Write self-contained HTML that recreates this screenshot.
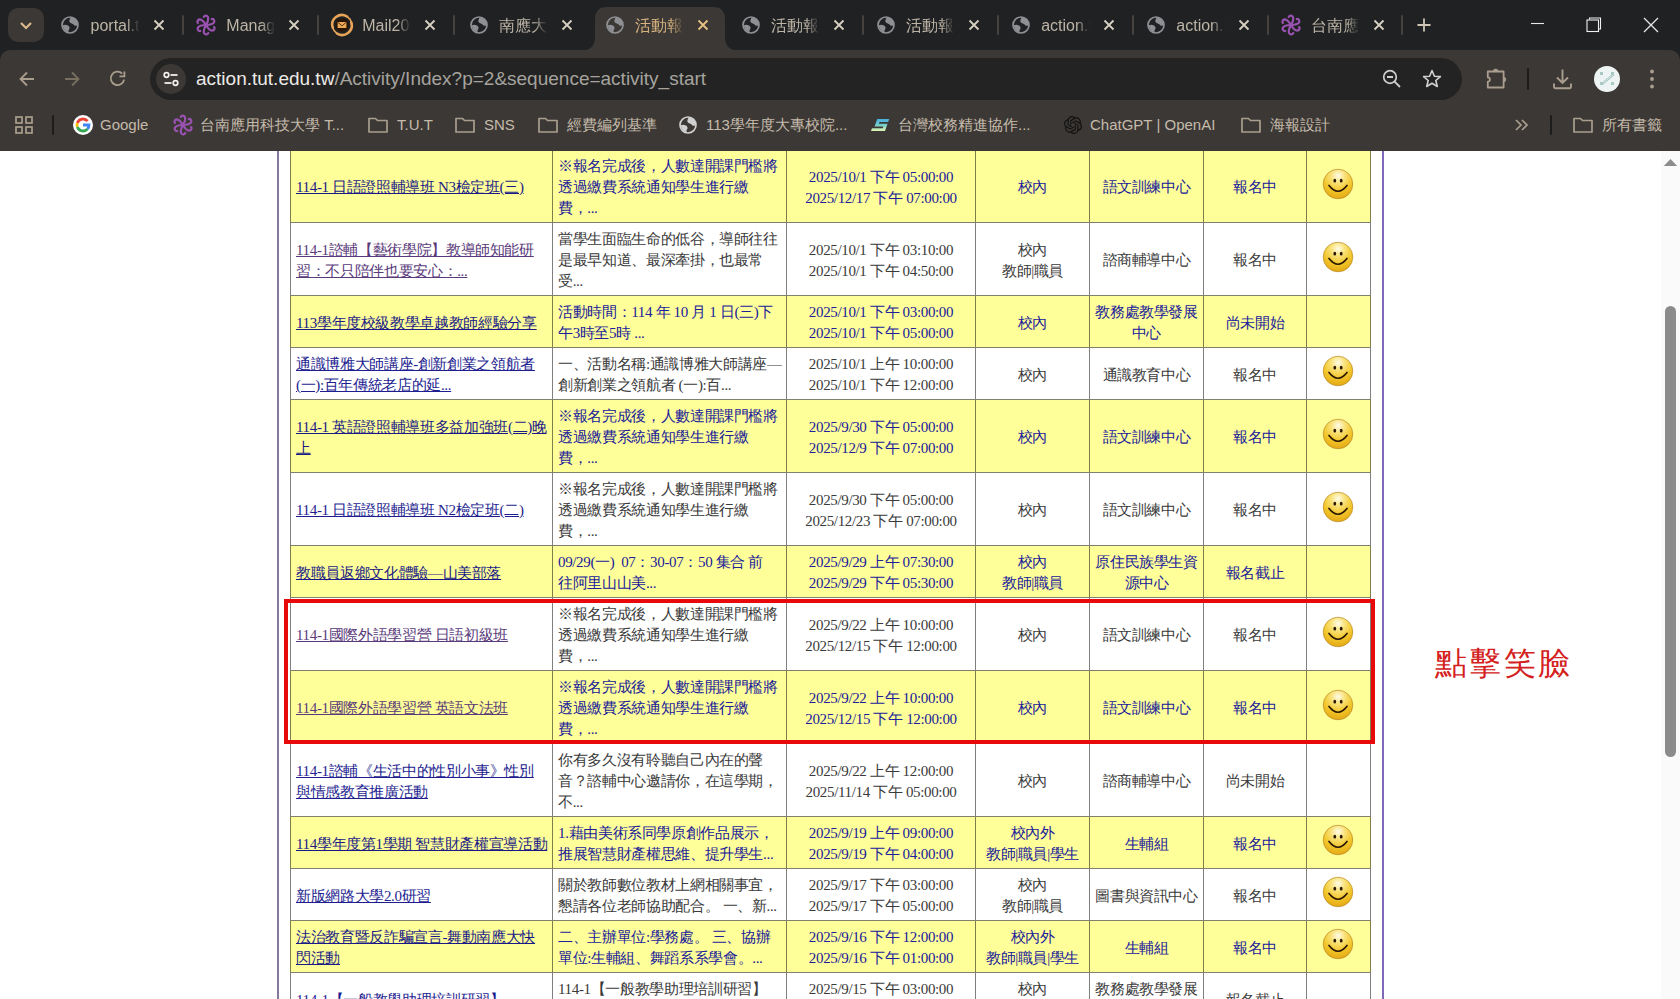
<!DOCTYPE html>
<html><head><meta charset="utf-8"><title>活動報名</title><style>
*{box-sizing:border-box}
html,body{margin:0;padding:0;width:1680px;height:999px;overflow:hidden;background:#fff;position:relative}
body{font-family:"Liberation Sans",sans-serif}
#tabstrip{position:absolute;left:0;top:0;width:1680px;height:70px;background:#1f2123}
.tsbtn{position:absolute;left:8px;top:8px;width:36px;height:34px;border-radius:10px;background:#3c3835}
.tsbtn svg{display:block}
.ic{position:absolute;display:block}
.ttl{position:absolute;top:15px;height:22px;line-height:22px;font-size:16px;width:49px;overflow:hidden;white-space:nowrap;
 -webkit-mask-image:linear-gradient(to right,#000 72%,transparent 100%)}
.tsep{position:absolute;top:15px;width:2px;height:20px;background:#46423d;border-radius:1px}
#toolbar{position:absolute;left:0;top:50px;width:1680px;height:101px;background:#3c3835;border-radius:10px 10px 0 0}
#omni{position:absolute;left:150px;top:58px;width:1312px;height:42px;border-radius:21px;background:#232323}
#url{position:absolute;left:196px;top:66px;height:26px;line-height:26px;font-size:19px;white-space:nowrap}
.bmt{position:absolute;top:114px;height:22px;line-height:22px;font-size:15px;color:#c5bbab;white-space:nowrap}
#page{position:absolute;left:0;top:151px;width:1661px;height:848px;background:#fff;overflow:hidden}
#sb{position:absolute;left:1661px;top:151px;width:19px;height:848px;background:#fafafa}
.pl{position:absolute;width:2px;background:#8a74b8}
#tbl{position:absolute;left:0;top:-151px;width:1680px;height:1200px;font-family:"Liberation Serif",serif;font-size:15px;line-height:21px;letter-spacing:-0.35px}
.row{position:absolute;left:290px;width:1081px}
.ry{background:#ffff99;color:#20209a}
.rw{background:#fff;color:#3a3a3a}
.c{position:absolute;top:0;bottom:0;display:flex;align-items:center;white-space:nowrap;padding-top:3px}
.c1,.c2{justify-content:flex-start;padding-left:5px;text-align:left}
.c3,.c4,.c5,.c6,.c7{justify-content:center;text-align:center}
.lk{text-decoration:underline}
.ry .lk{color:#1a1a86}
.rw .lk{color:#1e1e90}
.lk.lv{color:#5a3a7a}
.hl{position:absolute;left:290px;width:1081px;height:1px;background:#80806c}
.vl{position:absolute;top:0;bottom:0;width:1px;background:rgba(0,0,0,0.5)}
#redbox{position:absolute;left:284px;top:599px;border:4.5px solid #e80a0a}
#note{position:absolute;left:1435px;top:643px;font-size:32px;line-height:40px;color:#d42020;white-space:nowrap;letter-spacing:2.3px}
</style></head>
<body>
<div id="tabstrip"></div>
<div class="tsbtn"><svg width="36" height="34" viewBox="0 0 36 34"><path d="M13 15 L18 20 L23 15" fill="none" stroke="#dcb98a" stroke-width="2.2"/></svg></div>
<svg style="position:absolute;left:579px;top:7px" width="162" height="44" viewBox="0 0 162 44">
<path d="M0 44 Q16 44 16 30 L16 12 Q16 0 28 0 L134 0 Q146 0 146 12 L146 30 Q146 44 162 44 Z" fill="#3c3835"/></svg>
<svg class="ic" style="left:61.0px;top:16px" width="18" height="18" viewBox="0 0 18 18"><circle cx="9" cy="9" r="8" fill="none" stroke="#8e9094" stroke-width="1.7"/><path fill="#8e9094" d="M9.5 1.5 Q8 4.5 8.3 5.5 Q8.8 7.2 10.8 7.4 Q12.5 7.6 13.5 9.6 Q14.8 10.2 16.3 9.2 L16.3 6 Q14.5 2.3 9.5 1.5 Z"/><path fill="#8e9094" d="M1.7 9.2 Q3.5 8.6 5.5 8.9 Q8 9.3 8.5 11.3 Q8.8 12.8 7.8 13.8 Q7.2 15.2 7.6 16.4 Q2.5 15 1.7 9.2 Z"/></svg>
<div class="ttl" style="left:90.5px;color:#bdb4a6">portal.tut.edu.tw</div>
<svg class="ic" style="left:152.6px;top:19px" width="12" height="12" viewBox="0 0 12 12"><path d="M1.5 1.5 L10.5 10.5 M10.5 1.5 L1.5 10.5" stroke="#d8d0c2" stroke-width="1.8"/></svg>
<div class="tsep" style="left:181.5px"></div>
<svg class="ic" style="left:193.8px;top:13px" width="24" height="24" viewBox="-12 -12 24 24"><g fill="none" stroke="#9a52b0" stroke-width="2.2" stroke-linecap="round"><path d="M-0.5 0.8 C1.5 -2.5 3.2 -5.5 1.8 -8.3 C0.8 -10 -1.8 -9.6 -2.3 -8"/><path transform="rotate(60)" d="M-0.5 0.8 C1.5 -2.5 3.2 -5.5 1.8 -8.3 C0.8 -10 -1.8 -9.6 -2.3 -8"/><path transform="rotate(120)" d="M-0.5 0.8 C1.5 -2.5 3.2 -5.5 1.8 -8.3 C0.8 -10 -1.8 -9.6 -2.3 -8"/><path transform="rotate(180)" d="M-0.5 0.8 C1.5 -2.5 3.2 -5.5 1.8 -8.3 C0.8 -10 -1.8 -9.6 -2.3 -8"/><path transform="rotate(240)" d="M-0.5 0.8 C1.5 -2.5 3.2 -5.5 1.8 -8.3 C0.8 -10 -1.8 -9.6 -2.3 -8"/><path transform="rotate(300)" d="M-0.5 0.8 C1.5 -2.5 3.2 -5.5 1.8 -8.3 C0.8 -10 -1.8 -9.6 -2.3 -8"/></g></svg>
<div class="ttl" style="left:226.3px;color:#bdb4a6">Manage</div>
<svg class="ic" style="left:288.4px;top:19px" width="12" height="12" viewBox="0 0 12 12"><path d="M1.5 1.5 L10.5 10.5 M10.5 1.5 L1.5 10.5" stroke="#d8d0c2" stroke-width="1.8"/></svg>
<div class="tsep" style="left:317.3px"></div>
<svg class="ic" style="left:329.7px;top:13px" width="24" height="24" viewBox="-12 -12 24 24"><g fill="none" stroke="#e8a458" stroke-width="2.6" stroke-linecap="round"><path d="M5 -8.5 A9.6 9.6 0 0 0 -9.3 2.5"/><path d="M-5 8.5 A9.6 9.6 0 0 0 9.3 -2.5"/><path d="M-9.3 2.5 A9.6 9.6 0 0 0 -5 8.5" stroke-width="1.6"/><path d="M9.3 -2.5 A9.6 9.6 0 0 0 5 -8.5" stroke-width="1.6"/></g><circle r="6.6" fill="#2a1600"/><rect x="-4.4" y="-3" width="8.8" height="6" rx="0.6" fill="#eaa858"/><path d="M-4.1 -2.6 L0 0.8 L4.1 -2.6" fill="none" stroke="#6a3a08" stroke-width="1"/></svg>
<div class="ttl" style="left:362.2px;color:#bdb4a6">Mail2000</div>
<svg class="ic" style="left:424.3px;top:19px" width="12" height="12" viewBox="0 0 12 12"><path d="M1.5 1.5 L10.5 10.5 M10.5 1.5 L1.5 10.5" stroke="#d8d0c2" stroke-width="1.8"/></svg>
<div class="tsep" style="left:453.2px"></div>
<svg class="ic" style="left:469.6px;top:16px" width="18" height="18" viewBox="0 0 18 18"><circle cx="9" cy="9" r="8" fill="none" stroke="#8e9094" stroke-width="1.7"/><path fill="#8e9094" d="M9.5 1.5 Q8 4.5 8.3 5.5 Q8.8 7.2 10.8 7.4 Q12.5 7.6 13.5 9.6 Q14.8 10.2 16.3 9.2 L16.3 6 Q14.5 2.3 9.5 1.5 Z"/><path fill="#8e9094" d="M1.7 9.2 Q3.5 8.6 5.5 8.9 Q8 9.3 8.5 11.3 Q8.8 12.8 7.8 13.8 Q7.2 15.2 7.6 16.4 Q2.5 15 1.7 9.2 Z"/></svg>
<div class="ttl" style="left:499.1px;color:#bdb4a6">南應大學</div>
<svg class="ic" style="left:561.2px;top:19px" width="12" height="12" viewBox="0 0 12 12"><path d="M1.5 1.5 L10.5 10.5 M10.5 1.5 L1.5 10.5" stroke="#d8d0c2" stroke-width="1.8"/></svg>
<svg class="ic" style="left:605.6px;top:16px" width="18" height="18" viewBox="0 0 18 18"><circle cx="9" cy="9" r="8" fill="none" stroke="#8e9094" stroke-width="1.7"/><path fill="#8e9094" d="M9.5 1.5 Q8 4.5 8.3 5.5 Q8.8 7.2 10.8 7.4 Q12.5 7.6 13.5 9.6 Q14.8 10.2 16.3 9.2 L16.3 6 Q14.5 2.3 9.5 1.5 Z"/><path fill="#8e9094" d="M1.7 9.2 Q3.5 8.6 5.5 8.9 Q8 9.3 8.5 11.3 Q8.8 12.8 7.8 13.8 Q7.2 15.2 7.6 16.4 Q2.5 15 1.7 9.2 Z"/></svg>
<div class="ttl" style="left:635.1px;color:#d6b27f">活動報名</div>
<svg class="ic" style="left:697.2px;top:19px" width="12" height="12" viewBox="0 0 12 12"><path d="M1.5 1.5 L10.5 10.5 M10.5 1.5 L1.5 10.5" stroke="#e6c285" stroke-width="1.8"/></svg>
<svg class="ic" style="left:741.7px;top:16px" width="18" height="18" viewBox="0 0 18 18"><circle cx="9" cy="9" r="8" fill="none" stroke="#8e9094" stroke-width="1.7"/><path fill="#8e9094" d="M9.5 1.5 Q8 4.5 8.3 5.5 Q8.8 7.2 10.8 7.4 Q12.5 7.6 13.5 9.6 Q14.8 10.2 16.3 9.2 L16.3 6 Q14.5 2.3 9.5 1.5 Z"/><path fill="#8e9094" d="M1.7 9.2 Q3.5 8.6 5.5 8.9 Q8 9.3 8.5 11.3 Q8.8 12.8 7.8 13.8 Q7.2 15.2 7.6 16.4 Q2.5 15 1.7 9.2 Z"/></svg>
<div class="ttl" style="left:771.2px;color:#bdb4a6">活動報名</div>
<svg class="ic" style="left:833.3px;top:19px" width="12" height="12" viewBox="0 0 12 12"><path d="M1.5 1.5 L10.5 10.5 M10.5 1.5 L1.5 10.5" stroke="#d8d0c2" stroke-width="1.8"/></svg>
<div class="tsep" style="left:862.2px"></div>
<svg class="ic" style="left:876.7px;top:16px" width="18" height="18" viewBox="0 0 18 18"><circle cx="9" cy="9" r="8" fill="none" stroke="#8e9094" stroke-width="1.7"/><path fill="#8e9094" d="M9.5 1.5 Q8 4.5 8.3 5.5 Q8.8 7.2 10.8 7.4 Q12.5 7.6 13.5 9.6 Q14.8 10.2 16.3 9.2 L16.3 6 Q14.5 2.3 9.5 1.5 Z"/><path fill="#8e9094" d="M1.7 9.2 Q3.5 8.6 5.5 8.9 Q8 9.3 8.5 11.3 Q8.8 12.8 7.8 13.8 Q7.2 15.2 7.6 16.4 Q2.5 15 1.7 9.2 Z"/></svg>
<div class="ttl" style="left:906.2px;color:#bdb4a6">活動報名</div>
<svg class="ic" style="left:968.3px;top:19px" width="12" height="12" viewBox="0 0 12 12"><path d="M1.5 1.5 L10.5 10.5 M10.5 1.5 L1.5 10.5" stroke="#d8d0c2" stroke-width="1.8"/></svg>
<div class="tsep" style="left:997.2px"></div>
<svg class="ic" style="left:1011.7px;top:16px" width="18" height="18" viewBox="0 0 18 18"><circle cx="9" cy="9" r="8" fill="none" stroke="#8e9094" stroke-width="1.7"/><path fill="#8e9094" d="M9.5 1.5 Q8 4.5 8.3 5.5 Q8.8 7.2 10.8 7.4 Q12.5 7.6 13.5 9.6 Q14.8 10.2 16.3 9.2 L16.3 6 Q14.5 2.3 9.5 1.5 Z"/><path fill="#8e9094" d="M1.7 9.2 Q3.5 8.6 5.5 8.9 Q8 9.3 8.5 11.3 Q8.8 12.8 7.8 13.8 Q7.2 15.2 7.6 16.4 Q2.5 15 1.7 9.2 Z"/></svg>
<div class="ttl" style="left:1041.2px;color:#bdb4a6">action.tut</div>
<svg class="ic" style="left:1103.3px;top:19px" width="12" height="12" viewBox="0 0 12 12"><path d="M1.5 1.5 L10.5 10.5 M10.5 1.5 L1.5 10.5" stroke="#d8d0c2" stroke-width="1.8"/></svg>
<div class="tsep" style="left:1132.2px"></div>
<svg class="ic" style="left:1146.8px;top:16px" width="18" height="18" viewBox="0 0 18 18"><circle cx="9" cy="9" r="8" fill="none" stroke="#8e9094" stroke-width="1.7"/><path fill="#8e9094" d="M9.5 1.5 Q8 4.5 8.3 5.5 Q8.8 7.2 10.8 7.4 Q12.5 7.6 13.5 9.6 Q14.8 10.2 16.3 9.2 L16.3 6 Q14.5 2.3 9.5 1.5 Z"/><path fill="#8e9094" d="M1.7 9.2 Q3.5 8.6 5.5 8.9 Q8 9.3 8.5 11.3 Q8.8 12.8 7.8 13.8 Q7.2 15.2 7.6 16.4 Q2.5 15 1.7 9.2 Z"/></svg>
<div class="ttl" style="left:1176.3px;color:#bdb4a6">action.tut</div>
<svg class="ic" style="left:1238.4px;top:19px" width="12" height="12" viewBox="0 0 12 12"><path d="M1.5 1.5 L10.5 10.5 M10.5 1.5 L1.5 10.5" stroke="#d8d0c2" stroke-width="1.8"/></svg>
<div class="tsep" style="left:1267.3px"></div>
<svg class="ic" style="left:1278.5px;top:13px" width="24" height="24" viewBox="-12 -12 24 24"><g fill="none" stroke="#9a52b0" stroke-width="2.2" stroke-linecap="round"><path d="M-0.5 0.8 C1.5 -2.5 3.2 -5.5 1.8 -8.3 C0.8 -10 -1.8 -9.6 -2.3 -8"/><path transform="rotate(60)" d="M-0.5 0.8 C1.5 -2.5 3.2 -5.5 1.8 -8.3 C0.8 -10 -1.8 -9.6 -2.3 -8"/><path transform="rotate(120)" d="M-0.5 0.8 C1.5 -2.5 3.2 -5.5 1.8 -8.3 C0.8 -10 -1.8 -9.6 -2.3 -8"/><path transform="rotate(180)" d="M-0.5 0.8 C1.5 -2.5 3.2 -5.5 1.8 -8.3 C0.8 -10 -1.8 -9.6 -2.3 -8"/><path transform="rotate(240)" d="M-0.5 0.8 C1.5 -2.5 3.2 -5.5 1.8 -8.3 C0.8 -10 -1.8 -9.6 -2.3 -8"/><path transform="rotate(300)" d="M-0.5 0.8 C1.5 -2.5 3.2 -5.5 1.8 -8.3 C0.8 -10 -1.8 -9.6 -2.3 -8"/></g></svg>
<div class="ttl" style="left:1311.0px;color:#bdb4a6">台南應用</div>
<svg class="ic" style="left:1373.1px;top:19px" width="12" height="12" viewBox="0 0 12 12"><path d="M1.5 1.5 L10.5 10.5 M10.5 1.5 L1.5 10.5" stroke="#d8d0c2" stroke-width="1.8"/></svg>
<div class="tsep" style="left:1401px"></div>
<svg class="ic" style="left:1416px;top:17px" width="16" height="16" viewBox="0 0 16 16"><path d="M8 1.5 V14.5 M1.5 8 H14.5" stroke="#cfc6b6" stroke-width="1.8"/></svg>
<svg class="ic" style="left:1530px;top:15px" width="16" height="16" viewBox="0 0 16 16"><path d="M1 8.5 H14" stroke="#e8e8e8" stroke-width="1.1"/></svg>
<svg class="ic" style="left:1586px;top:17px" width="16" height="16" viewBox="0 0 16 16"><path d="M3.5 2.5 V1 H14.5 V12 H13" fill="none" stroke="#f0f0f0" stroke-width="1.1"/><rect x="1" y="3" width="11.5" height="11.5" fill="none" stroke="#f0f0f0" stroke-width="1.1"/></svg>
<svg class="ic" style="left:1643px;top:17px" width="16" height="16" viewBox="0 0 16 16"><path d="M1 1 L15 15 M15 1 L1 15" stroke="#e8e8e8" stroke-width="1.3"/></svg>
<div id="toolbar"></div>
<svg class="ic" style="left:17px;top:69px" width="20" height="20" viewBox="0 0 20 20"><path d="M17 10 H3.5 M10 3.5 L3.5 10 L10 16.5" fill="none" stroke="#a99e8e" stroke-width="1.8"/></svg>
<svg class="ic" style="left:62px;top:69px" width="20" height="20" viewBox="0 0 20 20"><path d="M3 10 H16.5 M10 3.5 L16.5 10 L10 16.5" fill="none" stroke="#77705f" stroke-width="1.8"/></svg>
<svg class="ic" style="left:107px;top:69px" width="20" height="20" viewBox="0 0 20 20"><path d="M15.2 4.6 A6.7 6.7 0 1 0 17.1 10.6" fill="none" stroke="#a99e8e" stroke-width="1.8"/><path d="M17.4 2.5 V7.4 H12.5" fill="none" stroke="#a99e8e" stroke-width="1.8"/></svg>
<div id="omni"></div>
<div style="position:absolute;left:156px;top:64px;width:30px;height:30px;border-radius:15px;background:#3c3835"></div>
<svg class="ic" style="left:161px;top:69px" width="20" height="20" viewBox="0 0 20 20"><circle cx="5.5" cy="6" r="2.3" fill="none" stroke="#f2f2f2" stroke-width="1.7"/><path d="M9.5 6 H16.5" stroke="#f2f2f2" stroke-width="1.8"/><circle cx="14.5" cy="14" r="2.3" fill="none" stroke="#f2f2f2" stroke-width="1.7"/><path d="M3.5 14 H10.5" stroke="#f2f2f2" stroke-width="1.8"/></svg>
<div id="url"><span style="color:#eceae6">action.tut.edu.tw</span><span style="color:#a6a39e">/Activity/Index?p=2&amp;sequence=activity_start</span></div>
<svg class="ic" style="left:1381px;top:68px" width="22" height="22" viewBox="0 0 22 22"><circle cx="9" cy="9" r="6.3" fill="none" stroke="#cfcfcf" stroke-width="1.7"/><path d="M6 9 H12 M13.6 13.6 L19 19" stroke="#cfcfcf" stroke-width="1.8"/></svg>
<svg class="ic" style="left:1421px;top:68px" width="22" height="22" viewBox="0 0 22 22"><path d="M11 2.5 L13.4 8.2 L19.4 8.6 L14.8 12.5 L16.3 18.5 L11 15.2 L5.7 18.5 L7.2 12.5 L2.6 8.6 L8.6 8.2 Z" fill="none" stroke="#d0d0d0" stroke-width="1.6" stroke-linejoin="round"/></svg>
<svg class="ic" style="left:1484px;top:66px" width="24" height="24" viewBox="0 0 24 24"><path d="M3.8 5.5 H19.6 V21.5 H3.8 V15.6 A2.1 2.1 0 0 0 3.8 11.4 Z" fill="none" stroke="#a99e8e" stroke-width="1.8" stroke-linejoin="round"/><path d="M9.2 5.6 A2.5 2.5 0 0 1 14.2 5.6 Z M19.5 11.2 A2.3 2.3 0 0 1 19.5 15.8 Z" fill="#a99e8e" stroke="#a99e8e" stroke-width="0.8"/></svg>
<div style="position:absolute;left:1527px;top:68px;width:2px;height:22px;background:#1c1c1c;border-radius:1px"></div>
<svg class="ic" style="left:1550px;top:67px" width="24" height="24" viewBox="0 0 24 24"><path d="M12.5 2.5 V15.5 M7 10.5 L12.5 16 L18 10.5 M4 16.5 V20 Q4 21.2 5.2 21.2 H19.8 Q21 21.2 21 20 V16.5" fill="none" stroke="#a99e8e" stroke-width="1.9"/></svg>
<div style="position:absolute;left:1594px;top:66px;width:26px;height:26px;border-radius:13px;background:#eef4f3"></div>
<svg class="ic" style="left:1594px;top:66px" width="26" height="26" viewBox="0 0 26 26"><path d="M7 18 L19 8 M8 19 L20 9" stroke="#9cc0bc" stroke-width="1"/><g fill="#a8c8c4"><rect x="6" y="6" width="3" height="3"/><rect x="17" y="6" width="3" height="3"/><rect x="6" y="16" width="3" height="3"/><rect x="17" y="16" width="3" height="3"/></g></svg>
<svg class="ic" style="left:1644px;top:68px" width="16" height="22" viewBox="0 0 16 22"><circle cx="8" cy="3.5" r="1.9" fill="#a99e8e"/><circle cx="8" cy="11" r="1.9" fill="#a99e8e"/><circle cx="8" cy="18.5" r="1.9" fill="#a99e8e"/></svg>
<svg class="ic" style="left:14px;top:115px" width="20" height="20" viewBox="0 0 20 20"><g fill="none" stroke="#a99e8e" stroke-width="1.7"><rect x="2" y="2" width="6" height="6"/><rect x="12" y="2" width="6" height="6"/><rect x="2" y="12" width="6" height="6"/><rect x="12" y="12" width="6" height="6"/></g></svg>
<div style="position:absolute;left:52px;top:115px;width:2px;height:20px;background:#1c1c1c;border-radius:1px"></div>
<div style="position:absolute;left:73px;top:115px;width:20px;height:20px;border-radius:10px;background:#fff"></div>
<svg class="ic" style="left:73px;top:115px" width="20" height="20" viewBox="0 0 20 20"><g fill="none" stroke-width="2.8"><path d="M14.6 6.14 A6 6 0 0 0 4.36 7.95" stroke="#ea4335"/><path d="M4.36 7.95 A6 6 0 0 0 4.36 12.05" stroke="#fbbc05"/><path d="M4.36 12.05 A6 6 0 0 0 14.6 13.86" stroke="#34a853"/><path d="M14.6 13.86 A6 6 0 0 0 16 10 H10" stroke="#4285f4"/></g></svg>
<div class="bmt" style="left:100px">Google</div>
<svg class="ic" style="left:171px;top:113px" width="24" height="24" viewBox="-12 -12 24 24"><g fill="none" stroke="#9a52b0" stroke-width="2.2" stroke-linecap="round"><path d="M-0.5 0.8 C1.5 -2.5 3.2 -5.5 1.8 -8.3 C0.8 -10 -1.8 -9.6 -2.3 -8"/><path transform="rotate(60)" d="M-0.5 0.8 C1.5 -2.5 3.2 -5.5 1.8 -8.3 C0.8 -10 -1.8 -9.6 -2.3 -8"/><path transform="rotate(120)" d="M-0.5 0.8 C1.5 -2.5 3.2 -5.5 1.8 -8.3 C0.8 -10 -1.8 -9.6 -2.3 -8"/><path transform="rotate(180)" d="M-0.5 0.8 C1.5 -2.5 3.2 -5.5 1.8 -8.3 C0.8 -10 -1.8 -9.6 -2.3 -8"/><path transform="rotate(240)" d="M-0.5 0.8 C1.5 -2.5 3.2 -5.5 1.8 -8.3 C0.8 -10 -1.8 -9.6 -2.3 -8"/><path transform="rotate(300)" d="M-0.5 0.8 C1.5 -2.5 3.2 -5.5 1.8 -8.3 C0.8 -10 -1.8 -9.6 -2.3 -8"/></g></svg>
<div class="bmt" style="left:200px">台南應用科技大學 T...</div>
<svg class="ic" style="left:367px;top:115px" width="22" height="20" viewBox="0 0 22 20"><path d="M2 3.5 H8.5 L10.5 5.5 H20 V17 H2 Z" fill="none" stroke="#a99e8e" stroke-width="1.7" stroke-linejoin="round"/></svg>
<div class="bmt" style="left:397px">T.U.T</div>
<svg class="ic" style="left:454px;top:115px" width="22" height="20" viewBox="0 0 22 20"><path d="M2 3.5 H8.5 L10.5 5.5 H20 V17 H2 Z" fill="none" stroke="#a99e8e" stroke-width="1.7" stroke-linejoin="round"/></svg>
<div class="bmt" style="left:484px">SNS</div>
<svg class="ic" style="left:537px;top:115px" width="22" height="20" viewBox="0 0 22 20"><path d="M2 3.5 H8.5 L10.5 5.5 H20 V17 H2 Z" fill="none" stroke="#a99e8e" stroke-width="1.7" stroke-linejoin="round"/></svg>
<div class="bmt" style="left:567px">經費編列基準</div>
<svg class="ic" style="left:679px;top:116px" width="18" height="18" viewBox="0 0 18 18"><circle cx="9" cy="9" r="8" fill="none" stroke="#d0d0d0" stroke-width="1.7"/><path fill="#d0d0d0" d="M9.5 1.5 Q8 4.5 8.3 5.5 Q8.8 7.2 10.8 7.4 Q12.5 7.6 13.5 9.6 Q14.8 10.2 16.3 9.2 L16.3 6 Q14.5 2.3 9.5 1.5 Z"/><path fill="#d0d0d0" d="M1.7 9.2 Q3.5 8.6 5.5 8.9 Q8 9.3 8.5 11.3 Q8.8 12.8 7.8 13.8 Q7.2 15.2 7.6 16.4 Q2.5 15 1.7 9.2 Z"/></svg>
<div class="bmt" style="left:706px">113學年度大專校院...</div>
<svg class="ic" style="left:871px;top:119px" width="19" height="12" viewBox="0 0 19 12"><defs><linearGradient id="SGR" x1="0" y1="0" x2="0" y2="1"><stop offset="0" stop-color="#48aee0"/><stop offset="0.5" stop-color="#70d0c8"/><stop offset="1" stop-color="#e4f4b0"/></linearGradient></defs><path transform="matrix(1,0,-0.35,1,4.2,0)" d="M2 0 H14 V3 H5.3 V4.7 H14 V12 H0 V9.2 H10.7 V7.5 H2 Z" fill="url(#SGR)"/></svg>
<div class="bmt" style="left:898px">台灣校務精進協作...</div>
<svg class="ic" style="left:1064px;top:116px" width="18" height="18" viewBox="0 0 24 24"><path fill="#111" d="M22.28 9.82a5.98 5.98 0 0 0-.52-4.91 6.05 6.050 0 0 0-6.51-2.9A6.07 6.07 0 0 0 4.98 4.18a5.98 5.98 0 0 0-4 2.9 6.05 6.05 0 0 0 .75 7.1 5.98 5.98 0 0 0 .51 4.91 6.05 6.05 0 0 0 6.51 2.9A5.98 5.98 0 0 0 13.26 24a6.06 6.06 0 0 0 5.77-4.21 5.99 5.99 0 0 0 4-2.9 6.06 6.06 0 0 0-.75-7.07zM13.26 22.430a4.48 4.48 0 0 1-2.88-1.04l.14-.08 4.78-2.76a.8.8 0 0 0 .39-.68v-6.74l2.02 1.170a.07.07 0 0 1 .04.05v5.58a4.5 4.5 0 0 1-4.49 4.5zm-9.66-4.13a4.47 4.47 0 0 1-.54-3.01l.14.09 4.78 2.76a.77.77 0 0 0 .78 0l5.84-3.37v2.33a.08.08 0 0 1-.03.06l-4.83 2.79a4.5 4.5 0 0 1-6.14-1.650zM2.34 7.9a4.49 4.49 0 0 1 2.37-1.97v5.68a.77.77 0 0 0 .39.68l5.81 3.35-2.02 1.17a.08.08 0 0 1-.07 0l-4.83-2.79A4.5 4.5 0 0 1 2.34 7.87zm16.6 3.86l-5.83-3.39 2.02-1.16a.08.08 0 0 1 .07 0l4.83 2.79a4.49 4.49 0 0 1-.68 8.1v-5.68a.79.79 0 0 0-.41-.67zm2.01-3.02l-.14-.09-4.77-2.78a.78.78 0 0 0-.79 0L9.41 9.23V6.9a.07.07 0 0 1 .03-.06l4.83-2.79a4.5 4.5 0 0 1 6.68 4.66zM8.31 12.86l-2.02-1.16a.08.08 0 0 1-.04-.06V6.07a4.5 4.5 0 0 1 7.38-3.45l-.14.08-4.78 2.76a.8.8 0 0 0-.39.68zm1.1-2.37l2.6-1.5 2.61 1.5v3l-2.6 1.5-2.61-1.5z"/></svg>
<div class="bmt" style="left:1090px">ChatGPT | OpenAI</div>
<svg class="ic" style="left:1240px;top:115px" width="22" height="20" viewBox="0 0 22 20"><path d="M2 3.5 H8.5 L10.5 5.5 H20 V17 H2 Z" fill="none" stroke="#a99e8e" stroke-width="1.7" stroke-linejoin="round"/></svg>
<div class="bmt" style="left:1270px">海報設計</div>
<svg class="ic" style="left:1514px;top:118px" width="16" height="14" viewBox="0 0 16 14"><path d="M2 2 L7 7 L2 12 M8 2 L13 7 L8 12" fill="none" stroke="#a99e8e" stroke-width="1.7"/></svg>
<div style="position:absolute;left:1550px;top:115px;width:2px;height:20px;background:#1c1c1c;border-radius:1px"></div>
<svg class="ic" style="left:1572px;top:115px" width="22" height="20" viewBox="0 0 22 20"><path d="M2 3.5 H8.5 L10.5 5.5 H20 V17 H2 Z" fill="none" stroke="#a99e8e" stroke-width="1.7" stroke-linejoin="round"/></svg>
<div class="bmt" style="left:1602px">所有書籤</div>
<div id="page">
<div id="tbl">
<div class="row ry" style="top:150px;height:72px">
<div class="c c1" style="left:1px;width:261px"><span class="lk">114-1 日語證照輔導班 N3檢定班(三)</span></div>
<div class="c c2" style="left:263px;width:233px">※報名完成後，人數達開課門檻將<br>透過繳費系統通知學生進行繳<br>費，...</div>
<div class="c c3" style="left:497px;width:188px">2025/10/1 下午 05:00:00<br>2025/12/17 下午 07:00:00</div>
<div class="c c4" style="left:686px;width:113px">校內</div>
<div class="c c5" style="left:800px;width:113px">語文訓練中心</div>
<div class="c c6" style="left:914px;width:102px">報名中</div>
<div class="c c7" style="left:1017px;width:63px"><svg width="32" height="32" viewBox="0 0 32 32" style="display:block;position:relative;top:-4px;left:-0.5px"><defs><radialGradient id="SG" cx="50%" cy="22%" r="78%"><stop offset="0" stop-color="#fffce8"/><stop offset="0.3" stop-color="#f9e27a"/><stop offset="0.65" stop-color="#f2c62a"/><stop offset="1" stop-color="#e4a814"/></radialGradient></defs><circle cx="16" cy="16" r="14.8" fill="url(#SG)" stroke="#b88a2a" stroke-width="0.7"/><ellipse cx="12.8" cy="12.7" rx="1.4" ry="1.9" fill="#2a1800"/><ellipse cx="19.2" cy="12.7" rx="1.4" ry="1.9" fill="#2a1800"/><path d="M7 17.5 Q16 29 25 17.5" fill="none" stroke="#2a1800" stroke-width="1.7" stroke-linecap="round"/></svg></div>
<div class="vl" style="left:0px"></div>
<div class="vl" style="left:262px"></div>
<div class="vl" style="left:496px"></div>
<div class="vl" style="left:685px"></div>
<div class="vl" style="left:799px"></div>
<div class="vl" style="left:913px"></div>
<div class="vl" style="left:1016px"></div>
<div class="vl" style="left:1080px"></div>
</div>
<div class="row rw" style="top:223px;height:72px">
<div class="c c1" style="left:1px;width:261px"><span class="lk lv">114-1諮輔【藝術學院】教導師知能研<br>習：不只陪伴也要安心：...</span></div>
<div class="c c2" style="left:263px;width:233px">當學生面臨生命的低谷，導師往往<br>是最早知道、最深牽掛，也最常<br>受...</div>
<div class="c c3" style="left:497px;width:188px">2025/10/1 下午 03:10:00<br>2025/10/1 下午 04:50:00</div>
<div class="c c4" style="left:686px;width:113px">校內<br>教師|職員</div>
<div class="c c5" style="left:800px;width:113px">諮商輔導中心</div>
<div class="c c6" style="left:914px;width:102px">報名中</div>
<div class="c c7" style="left:1017px;width:63px"><svg width="32" height="32" viewBox="0 0 32 32" style="display:block;position:relative;top:-4px;left:-0.5px"><defs><radialGradient id="SG" cx="50%" cy="22%" r="78%"><stop offset="0" stop-color="#fffce8"/><stop offset="0.3" stop-color="#f9e27a"/><stop offset="0.65" stop-color="#f2c62a"/><stop offset="1" stop-color="#e4a814"/></radialGradient></defs><circle cx="16" cy="16" r="14.8" fill="url(#SG)" stroke="#b88a2a" stroke-width="0.7"/><ellipse cx="12.8" cy="12.7" rx="1.4" ry="1.9" fill="#2a1800"/><ellipse cx="19.2" cy="12.7" rx="1.4" ry="1.9" fill="#2a1800"/><path d="M7 17.5 Q16 29 25 17.5" fill="none" stroke="#2a1800" stroke-width="1.7" stroke-linecap="round"/></svg></div>
<div class="vl" style="left:0px"></div>
<div class="vl" style="left:262px"></div>
<div class="vl" style="left:496px"></div>
<div class="vl" style="left:685px"></div>
<div class="vl" style="left:799px"></div>
<div class="vl" style="left:913px"></div>
<div class="vl" style="left:1016px"></div>
<div class="vl" style="left:1080px"></div>
</div>
<div class="row ry" style="top:296px;height:51px">
<div class="c c1" style="left:1px;width:261px"><span class="lk">113學年度校級教學卓越教師經驗分享</span></div>
<div class="c c2" style="left:263px;width:233px">活動時間：114 年 10 月 1 日(三)下<br>午3時至5時 ...</div>
<div class="c c3" style="left:497px;width:188px">2025/10/1 下午 03:00:00<br>2025/10/1 下午 05:00:00</div>
<div class="c c4" style="left:686px;width:113px">校內</div>
<div class="c c5" style="left:800px;width:113px">教務處教學發展<br>中心</div>
<div class="c c6" style="left:914px;width:102px">尚未開始</div>
<div class="c c7" style="left:1017px;width:63px"></div>
<div class="vl" style="left:0px"></div>
<div class="vl" style="left:262px"></div>
<div class="vl" style="left:496px"></div>
<div class="vl" style="left:685px"></div>
<div class="vl" style="left:799px"></div>
<div class="vl" style="left:913px"></div>
<div class="vl" style="left:1016px"></div>
<div class="vl" style="left:1080px"></div>
</div>
<div class="row rw" style="top:348px;height:51px">
<div class="c c1" style="left:1px;width:261px"><span class="lk">通識博雅大師講座-創新創業之領航者<br>(一):百年傳統老店的延...</span></div>
<div class="c c2" style="left:263px;width:233px">一、活動名稱:通識博雅大師講座—<br>創新創業之領航者 (一):百...</div>
<div class="c c3" style="left:497px;width:188px">2025/10/1 上午 10:00:00<br>2025/10/1 下午 12:00:00</div>
<div class="c c4" style="left:686px;width:113px">校內</div>
<div class="c c5" style="left:800px;width:113px">通識教育中心</div>
<div class="c c6" style="left:914px;width:102px">報名中</div>
<div class="c c7" style="left:1017px;width:63px"><svg width="32" height="32" viewBox="0 0 32 32" style="display:block;position:relative;top:-4px;left:-0.5px"><defs><radialGradient id="SG" cx="50%" cy="22%" r="78%"><stop offset="0" stop-color="#fffce8"/><stop offset="0.3" stop-color="#f9e27a"/><stop offset="0.65" stop-color="#f2c62a"/><stop offset="1" stop-color="#e4a814"/></radialGradient></defs><circle cx="16" cy="16" r="14.8" fill="url(#SG)" stroke="#b88a2a" stroke-width="0.7"/><ellipse cx="12.8" cy="12.7" rx="1.4" ry="1.9" fill="#2a1800"/><ellipse cx="19.2" cy="12.7" rx="1.4" ry="1.9" fill="#2a1800"/><path d="M7 17.5 Q16 29 25 17.5" fill="none" stroke="#2a1800" stroke-width="1.7" stroke-linecap="round"/></svg></div>
<div class="vl" style="left:0px"></div>
<div class="vl" style="left:262px"></div>
<div class="vl" style="left:496px"></div>
<div class="vl" style="left:685px"></div>
<div class="vl" style="left:799px"></div>
<div class="vl" style="left:913px"></div>
<div class="vl" style="left:1016px"></div>
<div class="vl" style="left:1080px"></div>
</div>
<div class="row ry" style="top:400px;height:72px">
<div class="c c1" style="left:1px;width:261px"><span class="lk">114-1 英語證照輔導班多益加強班(二)晚<br>上</span></div>
<div class="c c2" style="left:263px;width:233px">※報名完成後，人數達開課門檻將<br>透過繳費系統通知學生進行繳<br>費，...</div>
<div class="c c3" style="left:497px;width:188px">2025/9/30 下午 05:00:00<br>2025/12/9 下午 07:00:00</div>
<div class="c c4" style="left:686px;width:113px">校內</div>
<div class="c c5" style="left:800px;width:113px">語文訓練中心</div>
<div class="c c6" style="left:914px;width:102px">報名中</div>
<div class="c c7" style="left:1017px;width:63px"><svg width="32" height="32" viewBox="0 0 32 32" style="display:block;position:relative;top:-4px;left:-0.5px"><defs><radialGradient id="SG" cx="50%" cy="22%" r="78%"><stop offset="0" stop-color="#fffce8"/><stop offset="0.3" stop-color="#f9e27a"/><stop offset="0.65" stop-color="#f2c62a"/><stop offset="1" stop-color="#e4a814"/></radialGradient></defs><circle cx="16" cy="16" r="14.8" fill="url(#SG)" stroke="#b88a2a" stroke-width="0.7"/><ellipse cx="12.8" cy="12.7" rx="1.4" ry="1.9" fill="#2a1800"/><ellipse cx="19.2" cy="12.7" rx="1.4" ry="1.9" fill="#2a1800"/><path d="M7 17.5 Q16 29 25 17.5" fill="none" stroke="#2a1800" stroke-width="1.7" stroke-linecap="round"/></svg></div>
<div class="vl" style="left:0px"></div>
<div class="vl" style="left:262px"></div>
<div class="vl" style="left:496px"></div>
<div class="vl" style="left:685px"></div>
<div class="vl" style="left:799px"></div>
<div class="vl" style="left:913px"></div>
<div class="vl" style="left:1016px"></div>
<div class="vl" style="left:1080px"></div>
</div>
<div class="row rw" style="top:473px;height:72px">
<div class="c c1" style="left:1px;width:261px"><span class="lk">114-1 日語證照輔導班 N2檢定班(二)</span></div>
<div class="c c2" style="left:263px;width:233px">※報名完成後，人數達開課門檻將<br>透過繳費系統通知學生進行繳<br>費，...</div>
<div class="c c3" style="left:497px;width:188px">2025/9/30 下午 05:00:00<br>2025/12/23 下午 07:00:00</div>
<div class="c c4" style="left:686px;width:113px">校內</div>
<div class="c c5" style="left:800px;width:113px">語文訓練中心</div>
<div class="c c6" style="left:914px;width:102px">報名中</div>
<div class="c c7" style="left:1017px;width:63px"><svg width="32" height="32" viewBox="0 0 32 32" style="display:block;position:relative;top:-4px;left:-0.5px"><defs><radialGradient id="SG" cx="50%" cy="22%" r="78%"><stop offset="0" stop-color="#fffce8"/><stop offset="0.3" stop-color="#f9e27a"/><stop offset="0.65" stop-color="#f2c62a"/><stop offset="1" stop-color="#e4a814"/></radialGradient></defs><circle cx="16" cy="16" r="14.8" fill="url(#SG)" stroke="#b88a2a" stroke-width="0.7"/><ellipse cx="12.8" cy="12.7" rx="1.4" ry="1.9" fill="#2a1800"/><ellipse cx="19.2" cy="12.7" rx="1.4" ry="1.9" fill="#2a1800"/><path d="M7 17.5 Q16 29 25 17.5" fill="none" stroke="#2a1800" stroke-width="1.7" stroke-linecap="round"/></svg></div>
<div class="vl" style="left:0px"></div>
<div class="vl" style="left:262px"></div>
<div class="vl" style="left:496px"></div>
<div class="vl" style="left:685px"></div>
<div class="vl" style="left:799px"></div>
<div class="vl" style="left:913px"></div>
<div class="vl" style="left:1016px"></div>
<div class="vl" style="left:1080px"></div>
</div>
<div class="row ry" style="top:546px;height:51px">
<div class="c c1" style="left:1px;width:261px"><span class="lk">教職員返鄉文化體驗—山美部落</span></div>
<div class="c c2" style="left:263px;width:233px">09/29(一)&nbsp; 07：30-07：50 集合 前<br>往阿里山山美...</div>
<div class="c c3" style="left:497px;width:188px">2025/9/29 上午 07:30:00<br>2025/9/29 下午 05:30:00</div>
<div class="c c4" style="left:686px;width:113px">校內<br>教師|職員</div>
<div class="c c5" style="left:800px;width:113px">原住民族學生資<br>源中心</div>
<div class="c c6" style="left:914px;width:102px">報名截止</div>
<div class="c c7" style="left:1017px;width:63px"></div>
<div class="vl" style="left:0px"></div>
<div class="vl" style="left:262px"></div>
<div class="vl" style="left:496px"></div>
<div class="vl" style="left:685px"></div>
<div class="vl" style="left:799px"></div>
<div class="vl" style="left:913px"></div>
<div class="vl" style="left:1016px"></div>
<div class="vl" style="left:1080px"></div>
</div>
<div class="row rw" style="top:598px;height:72px">
<div class="c c1" style="left:1px;width:261px"><span class="lk lv">114-1國際外語學習營 日語初級班</span></div>
<div class="c c2" style="left:263px;width:233px">※報名完成後，人數達開課門檻將<br>透過繳費系統通知學生進行繳<br>費，...</div>
<div class="c c3" style="left:497px;width:188px">2025/9/22 上午 10:00:00<br>2025/12/15 下午 12:00:00</div>
<div class="c c4" style="left:686px;width:113px">校內</div>
<div class="c c5" style="left:800px;width:113px">語文訓練中心</div>
<div class="c c6" style="left:914px;width:102px">報名中</div>
<div class="c c7" style="left:1017px;width:63px"><svg width="32" height="32" viewBox="0 0 32 32" style="display:block;position:relative;top:-4px;left:-0.5px"><defs><radialGradient id="SG" cx="50%" cy="22%" r="78%"><stop offset="0" stop-color="#fffce8"/><stop offset="0.3" stop-color="#f9e27a"/><stop offset="0.65" stop-color="#f2c62a"/><stop offset="1" stop-color="#e4a814"/></radialGradient></defs><circle cx="16" cy="16" r="14.8" fill="url(#SG)" stroke="#b88a2a" stroke-width="0.7"/><ellipse cx="12.8" cy="12.7" rx="1.4" ry="1.9" fill="#2a1800"/><ellipse cx="19.2" cy="12.7" rx="1.4" ry="1.9" fill="#2a1800"/><path d="M7 17.5 Q16 29 25 17.5" fill="none" stroke="#2a1800" stroke-width="1.7" stroke-linecap="round"/></svg></div>
<div class="vl" style="left:0px"></div>
<div class="vl" style="left:262px"></div>
<div class="vl" style="left:496px"></div>
<div class="vl" style="left:685px"></div>
<div class="vl" style="left:799px"></div>
<div class="vl" style="left:913px"></div>
<div class="vl" style="left:1016px"></div>
<div class="vl" style="left:1080px"></div>
</div>
<div class="row ry" style="top:671px;height:72px">
<div class="c c1" style="left:1px;width:261px"><span class="lk lv">114-1國際外語學習營 英語文法班</span></div>
<div class="c c2" style="left:263px;width:233px">※報名完成後，人數達開課門檻將<br>透過繳費系統通知學生進行繳<br>費，...</div>
<div class="c c3" style="left:497px;width:188px">2025/9/22 上午 10:00:00<br>2025/12/15 下午 12:00:00</div>
<div class="c c4" style="left:686px;width:113px">校內</div>
<div class="c c5" style="left:800px;width:113px">語文訓練中心</div>
<div class="c c6" style="left:914px;width:102px">報名中</div>
<div class="c c7" style="left:1017px;width:63px"><svg width="32" height="32" viewBox="0 0 32 32" style="display:block;position:relative;top:-4px;left:-0.5px"><defs><radialGradient id="SG" cx="50%" cy="22%" r="78%"><stop offset="0" stop-color="#fffce8"/><stop offset="0.3" stop-color="#f9e27a"/><stop offset="0.65" stop-color="#f2c62a"/><stop offset="1" stop-color="#e4a814"/></radialGradient></defs><circle cx="16" cy="16" r="14.8" fill="url(#SG)" stroke="#b88a2a" stroke-width="0.7"/><ellipse cx="12.8" cy="12.7" rx="1.4" ry="1.9" fill="#2a1800"/><ellipse cx="19.2" cy="12.7" rx="1.4" ry="1.9" fill="#2a1800"/><path d="M7 17.5 Q16 29 25 17.5" fill="none" stroke="#2a1800" stroke-width="1.7" stroke-linecap="round"/></svg></div>
<div class="vl" style="left:0px"></div>
<div class="vl" style="left:262px"></div>
<div class="vl" style="left:496px"></div>
<div class="vl" style="left:685px"></div>
<div class="vl" style="left:799px"></div>
<div class="vl" style="left:913px"></div>
<div class="vl" style="left:1016px"></div>
<div class="vl" style="left:1080px"></div>
</div>
<div class="row rw" style="top:744px;height:72px">
<div class="c c1" style="left:1px;width:261px"><span class="lk">114-1諮輔《生活中的性別小事》性別<br>與情感教育推廣活動</span></div>
<div class="c c2" style="left:263px;width:233px">你有多久沒有聆聽自己內在的聲<br>音？諮輔中心邀請你，在這學期，<br>不...</div>
<div class="c c3" style="left:497px;width:188px">2025/9/22 上午 12:00:00<br>2025/11/14 下午 05:00:00</div>
<div class="c c4" style="left:686px;width:113px">校內</div>
<div class="c c5" style="left:800px;width:113px">諮商輔導中心</div>
<div class="c c6" style="left:914px;width:102px">尚未開始</div>
<div class="c c7" style="left:1017px;width:63px"></div>
<div class="vl" style="left:0px"></div>
<div class="vl" style="left:262px"></div>
<div class="vl" style="left:496px"></div>
<div class="vl" style="left:685px"></div>
<div class="vl" style="left:799px"></div>
<div class="vl" style="left:913px"></div>
<div class="vl" style="left:1016px"></div>
<div class="vl" style="left:1080px"></div>
</div>
<div class="row ry" style="top:817px;height:51px">
<div class="c c1" style="left:1px;width:261px"><span class="lk">114學年度第1學期 智慧財產權宣導活動</span></div>
<div class="c c2" style="left:263px;width:233px">1.藉由美術系同學原創作品展示，<br>推展智慧財產權思維、提升學生...</div>
<div class="c c3" style="left:497px;width:188px">2025/9/19 上午 09:00:00<br>2025/9/19 下午 04:00:00</div>
<div class="c c4" style="left:686px;width:113px">校內外<br>教師|職員|學生</div>
<div class="c c5" style="left:800px;width:113px">生輔組</div>
<div class="c c6" style="left:914px;width:102px">報名中</div>
<div class="c c7" style="left:1017px;width:63px"><svg width="32" height="32" viewBox="0 0 32 32" style="display:block;position:relative;top:-4px;left:-0.5px"><defs><radialGradient id="SG" cx="50%" cy="22%" r="78%"><stop offset="0" stop-color="#fffce8"/><stop offset="0.3" stop-color="#f9e27a"/><stop offset="0.65" stop-color="#f2c62a"/><stop offset="1" stop-color="#e4a814"/></radialGradient></defs><circle cx="16" cy="16" r="14.8" fill="url(#SG)" stroke="#b88a2a" stroke-width="0.7"/><ellipse cx="12.8" cy="12.7" rx="1.4" ry="1.9" fill="#2a1800"/><ellipse cx="19.2" cy="12.7" rx="1.4" ry="1.9" fill="#2a1800"/><path d="M7 17.5 Q16 29 25 17.5" fill="none" stroke="#2a1800" stroke-width="1.7" stroke-linecap="round"/></svg></div>
<div class="vl" style="left:0px"></div>
<div class="vl" style="left:262px"></div>
<div class="vl" style="left:496px"></div>
<div class="vl" style="left:685px"></div>
<div class="vl" style="left:799px"></div>
<div class="vl" style="left:913px"></div>
<div class="vl" style="left:1016px"></div>
<div class="vl" style="left:1080px"></div>
</div>
<div class="row rw" style="top:869px;height:51px">
<div class="c c1" style="left:1px;width:261px"><span class="lk">新版網路大學2.0研習</span></div>
<div class="c c2" style="left:263px;width:233px">關於教師數位教材上網相關事宜，<br>懇請各位老師協助配合。 一、新...</div>
<div class="c c3" style="left:497px;width:188px">2025/9/17 下午 03:00:00<br>2025/9/17 下午 05:00:00</div>
<div class="c c4" style="left:686px;width:113px">校內<br>教師|職員</div>
<div class="c c5" style="left:800px;width:113px">圖書與資訊中心</div>
<div class="c c6" style="left:914px;width:102px">報名中</div>
<div class="c c7" style="left:1017px;width:63px"><svg width="32" height="32" viewBox="0 0 32 32" style="display:block;position:relative;top:-4px;left:-0.5px"><defs><radialGradient id="SG" cx="50%" cy="22%" r="78%"><stop offset="0" stop-color="#fffce8"/><stop offset="0.3" stop-color="#f9e27a"/><stop offset="0.65" stop-color="#f2c62a"/><stop offset="1" stop-color="#e4a814"/></radialGradient></defs><circle cx="16" cy="16" r="14.8" fill="url(#SG)" stroke="#b88a2a" stroke-width="0.7"/><ellipse cx="12.8" cy="12.7" rx="1.4" ry="1.9" fill="#2a1800"/><ellipse cx="19.2" cy="12.7" rx="1.4" ry="1.9" fill="#2a1800"/><path d="M7 17.5 Q16 29 25 17.5" fill="none" stroke="#2a1800" stroke-width="1.7" stroke-linecap="round"/></svg></div>
<div class="vl" style="left:0px"></div>
<div class="vl" style="left:262px"></div>
<div class="vl" style="left:496px"></div>
<div class="vl" style="left:685px"></div>
<div class="vl" style="left:799px"></div>
<div class="vl" style="left:913px"></div>
<div class="vl" style="left:1016px"></div>
<div class="vl" style="left:1080px"></div>
</div>
<div class="row ry" style="top:921px;height:51px">
<div class="c c1" style="left:1px;width:261px"><span class="lk">法治教育暨反詐騙宣言-舞動南應大快<br>閃活動</span></div>
<div class="c c2" style="left:263px;width:233px">二、主辦單位:學務處。 三、協辦<br>單位:生輔組、舞蹈系系學會。...</div>
<div class="c c3" style="left:497px;width:188px">2025/9/16 下午 12:00:00<br>2025/9/16 下午 01:00:00</div>
<div class="c c4" style="left:686px;width:113px">校內外<br>教師|職員|學生</div>
<div class="c c5" style="left:800px;width:113px">生輔組</div>
<div class="c c6" style="left:914px;width:102px">報名中</div>
<div class="c c7" style="left:1017px;width:63px"><svg width="32" height="32" viewBox="0 0 32 32" style="display:block;position:relative;top:-4px;left:-0.5px"><defs><radialGradient id="SG" cx="50%" cy="22%" r="78%"><stop offset="0" stop-color="#fffce8"/><stop offset="0.3" stop-color="#f9e27a"/><stop offset="0.65" stop-color="#f2c62a"/><stop offset="1" stop-color="#e4a814"/></radialGradient></defs><circle cx="16" cy="16" r="14.8" fill="url(#SG)" stroke="#b88a2a" stroke-width="0.7"/><ellipse cx="12.8" cy="12.7" rx="1.4" ry="1.9" fill="#2a1800"/><ellipse cx="19.2" cy="12.7" rx="1.4" ry="1.9" fill="#2a1800"/><path d="M7 17.5 Q16 29 25 17.5" fill="none" stroke="#2a1800" stroke-width="1.7" stroke-linecap="round"/></svg></div>
<div class="vl" style="left:0px"></div>
<div class="vl" style="left:262px"></div>
<div class="vl" style="left:496px"></div>
<div class="vl" style="left:685px"></div>
<div class="vl" style="left:799px"></div>
<div class="vl" style="left:913px"></div>
<div class="vl" style="left:1016px"></div>
<div class="vl" style="left:1080px"></div>
</div>
<div class="row rw" style="top:973px;height:51px">
<div class="c c1" style="left:1px;width:261px"><span class="lk">114-1【一般教學助理培訓研習】</span></div>
<div class="c c2" style="left:263px;width:233px">114-1【一般教學助理培訓研習】<br>...</div>
<div class="c c3" style="left:497px;width:188px">2025/9/15 下午 03:00:00<br>2025/9/15 下午 05:00:00</div>
<div class="c c4" style="left:686px;width:113px">校內<br>教師|職員</div>
<div class="c c5" style="left:800px;width:113px">教務處教學發展<br>中心</div>
<div class="c c6" style="left:914px;width:102px">報名截止</div>
<div class="c c7" style="left:1017px;width:63px"></div>
<div class="vl" style="left:0px"></div>
<div class="vl" style="left:262px"></div>
<div class="vl" style="left:496px"></div>
<div class="vl" style="left:685px"></div>
<div class="vl" style="left:799px"></div>
<div class="vl" style="left:913px"></div>
<div class="vl" style="left:1016px"></div>
<div class="vl" style="left:1080px"></div>
</div>
<div class="hl" style="top:222px"></div>
<div class="hl" style="top:295px"></div>
<div class="hl" style="top:347px"></div>
<div class="hl" style="top:399px"></div>
<div class="hl" style="top:472px"></div>
<div class="hl" style="top:545px"></div>
<div class="hl" style="top:597px"></div>
<div class="hl" style="top:670px"></div>
<div class="hl" style="top:743px"></div>
<div class="hl" style="top:816px"></div>
<div class="hl" style="top:868px"></div>
<div class="hl" style="top:920px"></div>
<div class="hl" style="top:972px"></div>
</div>
<div class="pl" style="left:277px;top:0;height:848px;background:#85789c"></div>
<div class="pl" style="left:1382px;top:0;height:848px;background:#8068b8"></div>
</div>
<div id="redbox" style="width:1091px;height:145px"></div>
<div id="note">點擊笑臉</div>
<div id="sb">
<svg style="position:absolute;left:2px;top:7px" width="15" height="9" viewBox="0 0 15 9"><path d="M0.8 8 L7.5 1 L14.2 8 Z" fill="#8c8c8c"/></svg>
<div style="position:absolute;left:4px;top:155px;width:11px;height:451px;border-radius:5.5px;background:#8b8b8b"></div>
</div>
</body></html>
